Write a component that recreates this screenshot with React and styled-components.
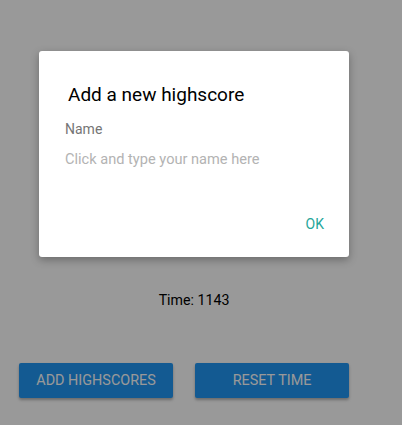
import React from "react";
import styled, { createGlobalStyle } from "styled-components";

export default function App() {
  return (
    <>
      <GlobalStyle />
      <Screen>
        <Content>
          <TimeLabel>Time: 1143</TimeLabel>
          <ButtonRow>
            <Button>Add highscores</Button>
            <Button>Reset time</Button>
          </ButtonRow>
        </Content>

        <Overlay>
          <Dialog>
            <Title>Add a new highscore</Title>
            <Body>
              <FieldLabel>Name</FieldLabel>
              <NameInput placeholder="Click and type your name here" />
            </Body>
            <Actions>
              <ActionButton>OK</ActionButton>
            </Actions>
          </Dialog>
        </Overlay>
      </Screen>
    </>
  );
}

const GlobalStyle = createGlobalStyle`
  body {
    margin: 0;
    background: #ffffff;
    font-family: Roboto, "Noto Sans", sans-serif;
  }
`;

const Screen = styled.div`
  position: relative;
  width: 402px;
  height: 425px;
  overflow: hidden;
  background: #ffffff;
`;

const Content = styled.div`
  width: 388px;
  padding-top: 290px;
  display: flex;
  flex-direction: column;
  align-items: center;
`;

const TimeLabel = styled.div`
  font-size: 14.2px;
  line-height: 20px;
  color: #000000;
`;

const ButtonRow = styled.div`
  align-self: stretch;
  display: flex;
  gap: 22px;
  margin-top: 53px;
  padding: 0 39px 0 19px;
`;

const Button = styled.div`
  flex: 1;
  height: 35px;
  display: flex;
  align-items: center;
  justify-content: center;
  background: #2196f3;
  color: #ffffff;
  font-size: 14.4px;
  text-transform: uppercase;
  border-radius: 2px;
  box-shadow: 0 2px 3px rgba(0, 0, 0, 0.3);
`;

const Overlay = styled.div`
  position: absolute;
  inset: 0;
  background: rgba(0, 0, 0, 0.4);
`;

const Dialog = styled.div`
  width: 310px;
  margin: 51px 0 0 39px;
  background: #ffffff;
  border-radius: 3px;
  box-shadow: 0 3px 8px rgba(0, 0, 0, 0.3);
  padding: 31px 0 23px;
`;

const Title = styled.div`
  padding-left: 29px;
  font-size: 19px;
  line-height: 24px;
  padding-top: 1px;
  color: #000000;
`;

const Body = styled.div`
  padding: 12px 24px 0 26px;
  display: flex;
  flex-direction: column;
  gap: 10px;
`;

const FieldLabel = styled.div`
  font-size: 14px;
  line-height: 20px;
  color: #757575;
`;

const NameInput = styled.input`
  border: none;
  outline: none;
  padding: 0;
  margin: 0;
  background: transparent;
  font-family: Roboto, "Noto Sans", sans-serif;
  font-size: 14.6px;
  line-height: 20px;
  height: 20px;
  color: #212121;

  &::placeholder {
    color: #b3b3b3;
  }
`;

const Actions = styled.div`
  display: flex;
  justify-content: flex-end;
  padding: 45px 25px 0 0;
`;

const ActionButton = styled.div`
  font-size: 14px;
  line-height: 20px;
  color: #26a69a;
  text-transform: uppercase;
`;
